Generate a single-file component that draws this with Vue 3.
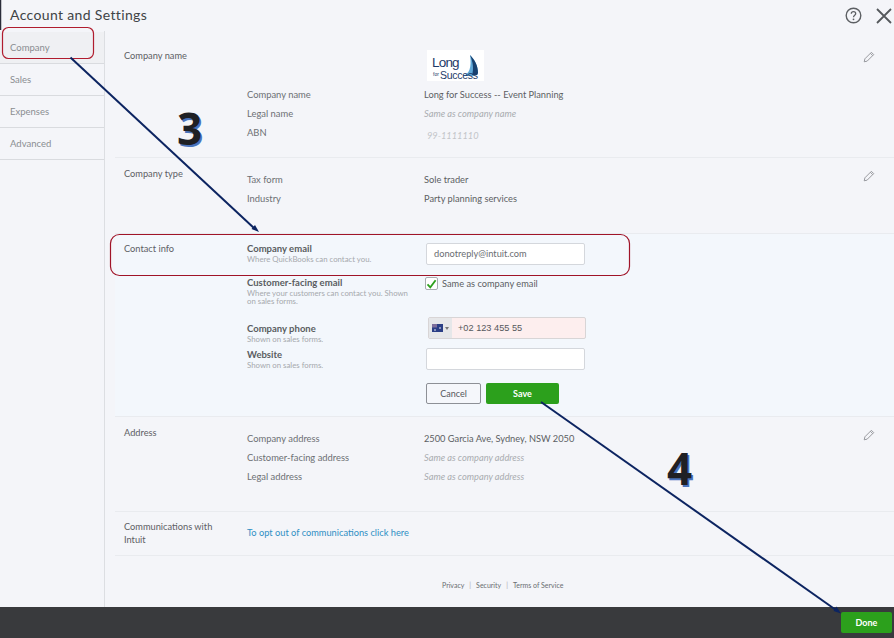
<script setup>
const companyRows = [
  { k: 'Company name', v: 'Long for Success -- Event Planning' },
  { k: 'Legal name', v: 'Same as company name', muted: true },
]
const typeRows = [
  { k: 'Tax form', v: 'Sole trader' },
  { k: 'Industry', v: 'Party planning services' },
]
const addressRows = [
  { k: 'Company address', v: '2500 Garcia Ave, Sydney, NSW 2050' },
  { k: 'Customer-facing address', v: 'Same as company address', muted: true },
  { k: 'Legal address', v: 'Same as company address', muted: true },
]
const nav = ['Company', 'Sales', 'Expenses', 'Advanced']
</script>

<template>
  <div class="page">
    <header class="top">
      <h1>Account and Settings</h1>
      <div class="top-icons">
        <svg width="17" height="17" viewBox="0 0 17 17" fill="none">
          <circle cx="8.5" cy="8.5" r="7.3" stroke="#5c5f63" stroke-width="1.4" />
          <path d="M6.3 6.8c0-1.3 1-2.1 2.2-2.1s2.2.8 2.2 2c0 1.700-2.200 1.600-2.200 3.500" stroke="#5c5f63" stroke-width="1.300" />
          <circle cx="8.500" cy="12.300" r=".9" fill="#5c5f63" />
        </svg>
        <svg width="16" height="16" viewBox="0 0 16 16" fill="none">
          <path d="M1 1l14 14M15 1L1 15" stroke="#55585c" stroke-width="1.800" />
        </svg>
      </div>
    </header>

    <div class="body">
      <nav class="side">
        <div v-for="(n, i) in nav" :key="n" class="nav-item" :class="{ active: i === 0 }">{{ n }}</div>
      </nav>

      <main class="main">
        <section class="row r1">
          <div class="label l1">Company name</div>
          <div class="stack">
            <div class="logo">
              <svg width="57" height="31" viewBox="0 0 57 31">
                <path d="M43 5c5 5 8 11 8 18-1 2-3 3-5 3H36c6-2 9-8 7-21z" fill="#5fa8d8" />
                <path d="M43 5c5 5 8 11 8 18l-1 2h-5c2-6 1-13-2-20z" fill="#17406f" />
                <text x="5" y="16.500" class="logo-long">Long</text>
                <text x="6" y="26" class="logo-for">for</text>
                <text x="13" y="29" class="logo-succ">Success</text>
              </svg>
            </div>
            <div v-for="r in companyRows" :key="r.k" class="kv">
              <span class="k">{{ r.k }}</span>
              <span class="v" :class="{ muted: r.muted }">{{ r.v }}</span>
            </div>
            <div class="kv">
              <span class="k">ABN</span>
              <span class="v abn">99-1111110</span>
            </div>
          </div>
          <svg class="pencil p1" width="12" height="12" viewBox="0 0 12 12" fill="none">
            <path d="M1.200 10.800l.7-3L8.400 1.300l2.300 2.300-6.500 6.500z M7.400 2.300l2.300 2.300" stroke="#8d9095" stroke-width=".9" />
          </svg>
        </section>

        <section class="row r2">
          <div class="label l2">Company type</div>
          <div class="stack">
            <div v-for="r in typeRows" :key="r.k" class="kv">
              <span class="k">{{ r.k }}</span>
              <span class="v">{{ r.v }}</span>
            </div>
          </div>
          <svg class="pencil p2" width="12" height="12" viewBox="0 0 12 12" fill="none">
            <path d="M1.200 10.800l.7-3L8.400 1.300l2.300 2.300-6.500 6.500z M7.400 2.300l2.300 2.300" stroke="#8d9095" stroke-width=".9" />
          </svg>
        </section>

        <section class="row r3">
          <div class="label l3">Contact info</div>
          <div class="form">
            <div class="field f-email">
              <div class="field-text">
                <strong>Company email</strong>
                <small>Where QuickBooks can contact you.</small>
              </div>
              <div class="input email">donotreply@intuit.com</div>
            </div>
            <div class="field f-cust">
              <div class="field-text">
                <strong>Customer-facing email</strong>
                <small>Where your customers can contact you. Shown on sales forms.</small>
              </div>
              <div class="check-line">
                <span class="check">
                  <svg width="11" height="10" viewBox="0 0 11 10" fill="none">
                    <path d="M1.500 5.300l2.800 3L9.600 1.200" stroke="#2ca01c" stroke-width="1.800" />
                  </svg>
                </span>
                <span class="v">Same as company email</span>
              </div>
            </div>
            <div class="field f-phone">
              <div class="field-text">
                <strong>Company phone</strong>
                <small>Shown on sales forms.</small>
              </div>
              <div class="phone">
                <span class="flag">
                  <svg width="11" height="8" viewBox="0 0 11 8">
                    <rect width="11" height="8" fill="#2b3f86" />
                    <rect width="5" height="3.500" fill="#7d6f9c" />
                    <circle cx="8" cy="4" r=".8" fill="#fff" />
                    <circle cx="3" cy="6" r=".8" fill="#fff" />
                  </svg>
                  <i class="caret"></i>
                </span>
                <span class="phone-num">+02 123 455 55</span>
              </div>
            </div>
            <div class="field f-web">
              <div class="field-text">
                <strong>Website</strong>
                <small>Shown on sales forms.</small>
              </div>
              <div class="input web"></div>
            </div>
            <div class="actions">
              <button class="btn cancel">Cancel</button>
              <button class="btn save">Save</button>
            </div>
          </div>
        </section>

        <section class="row r4">
          <div class="label l4">Address</div>
          <div class="stack">
            <div v-for="r in addressRows" :key="r.k" class="kv">
              <span class="k">{{ r.k }}</span>
              <span class="v" :class="{ muted: r.muted }">{{ r.v }}</span>
            </div>
          </div>
          <svg class="pencil p4" width="12" height="12" viewBox="0 0 12 12" fill="none">
            <path d="M1.200 10.800l.7-3L8.400 1.300l2.300 2.300-6.500 6.500z M7.400 2.300l2.300 2.300" stroke="#8d9095" stroke-width=".9" />
          </svg>
        </section>

        <section class="row r5">
          <div class="label l5">Communications with Intuit</div>
          <a class="link">To opt out of communications click here</a>
        </section>

        <footer class="legal">
          <span>Privacy</span><b>|</b><span>Security</span><b>|</b><span>Terms of Service</span>
        </footer>
      </main>
    </div>

    <div class="bar">
      <button class="btn done">Done</button>
    </div>

    <svg class="notes" width="894" height="638" viewBox="0 0 894 638" fill="none">
      <path d="M.5 0v30" stroke="#2b2d3a" stroke-width="1.500" />
      <rect x="2.500" y="27.500" width="91" height="31" rx="6" stroke="#b01c2e" stroke-width="1.200" />
      <rect x="110.500" y="234.500" width="519" height="41" rx="9" stroke="#a01428" stroke-width="1.200" />
      <path d="M70.500 57.500L255 229" stroke="#0c2461" stroke-width="2" />
      <path d="M259 232l-7.500-3 3.500-4z" fill="#0c2461" />
      <path d="M541 402L836 610" stroke="#0c2461" stroke-width="2" />
      <path d="M841 613.500l-7.500-2.500 3-4.500z" fill="#0c2461" />
    </svg>
    <div class="num n3">3</div>
    <div class="num n4">4</div>
  </div>
</template>

<style scoped>
.page {
  position: relative;
  width: 894px;
  height: 638px;
  overflow: hidden;
  display: flex;
  flex-direction: column;
  background: #f4f5f9;
  color: #5d6064;
  font-family: Lato, "Open Sans", sans-serif;
  font-size: 9.250px;
}
.top {
  height: 31px;
  flex: none;
  display: flex;
  align-items: center;
  justify-content: space-between;
  padding: 0 10px 3px 10px;
  box-sizing: border-box;
}
.top h1 {
  margin: 0;
  font-size: 14px;
  font-weight: 400;
  letter-spacing: .35px;
  color: #404346;
}
.top-icons {
  display: flex;
  align-items: center;
  gap: 14px;
  margin-right: -8px;
  margin-top: 3px;
}
.body {
  flex: 1;
  display: flex;
  min-height: 0;
}
.side {
  width: 105px;
  flex: none;
  box-sizing: border-box;
  border-right: 1px solid #dcdee2;
  padding-top: 1px;
}
.nav-item {
  height: 32px;
  box-sizing: border-box;
  border-bottom: 1px solid #d9dbdf;
  padding-left: 10px;
  line-height: 31px;
  font-size: 9.500px;
  color: #8a8d91;
}
.nav-item.active {
  background: #eff0f3;
}
.main {
  flex: 1;
  margin-left: 10px;
  display: flex;
  flex-direction: column;
}
.row {
  position: relative;
  flex: none;
  box-sizing: border-box;
  display: grid;
  grid-template-columns: 123px 1fr;
  padding-left: 9px;
  border-bottom: 1px solid #e9ebef;
}
.label {
  color: #5d6064;
  line-height: 13px;
}
.r1 { height: 127px; }
.l1 { margin-top: 18px; }
.r2 { height: 76px; }
.l2 { margin-top: 9px; }
.r3 { height: 183px; background: #f3f7fc; }
.l3 { margin-top: 8px; }
.r4 { height: 95px; }
.l4 { margin-top: 9px; }
.r5 { height: 44px; }
.l5 { margin-top: 8px; width: 100px; }
.r1 .stack { padding-top: 19px; }
.r2 .stack { padding-top: 12px; }
.r4 .stack { padding-top: 12px; }
.logo {
  margin-left: 180px;
  width: 57px;
  height: 31px;
  background: #fff;
  margin-bottom: 4px;
}
.logo svg { display: block; }
.logo-long {
  font-family: "Liberation Sans", sans-serif;
  font-size: 13.500px;
  letter-spacing: -.8px;
  fill: #1e3a68;
}
.logo-for {
  font-family: "Liberation Sans", sans-serif;
  font-size: 5px;
  fill: #1e3a68;
}
.logo-succ {
  font-family: "Liberation Sans", sans-serif;
  font-size: 10.500px;
  letter-spacing: -.3px;
  fill: #1e3a68;
}
.kv {
  display: grid;
  grid-template-columns: 177px 1fr;
  height: 19px;
  line-height: 19px;
}
.k { color: #6d7074; font-size: 9.400px; }
.v { color: #5c5f63; }
.v.muted {
  font-style: italic;
  color: #a9acb0;
}
.v.abn {
  font-style: italic;
  color: #c3c5c9;
  padding-left: 3px;
  padding-top: 3px;
}
.pencil { position: absolute; right: 19px; }
.p1 { top: 20px; }
.p2 { top: 12px; }
.p4 { top: 12px; }
.form {
  padding-top: 9px;
}
.field {
  display: grid;
  grid-template-columns: 179px 1fr;
}
.field-text { display: flex; flex-direction: column; }
.field-text strong {
  font-weight: 700;
  font-size: 9.500px;
  color: #5a5d61;
  line-height: 12px;
}
.field-text small {
  font-size: 7.800px;
  color: #a6a9ad;
  line-height: 8px;
  width: 170px;
}
.input {
  box-sizing: border-box;
  width: 159px;
  background: #fff;
  border: 1px solid #d4d7dc;
  border-radius: 2px;
}
.email {
  height: 22px;
  line-height: 20px;
  padding-left: 7px;
  color: #6a6d71;
}
.f-email { height: 34px; }
.f-cust { height: 46px; }
.f-phone { height: 26px; }
.f-web { height: 34px; }
.check-line {
  display: flex;
  align-items: center;
  gap: 4px;
  margin-left: -1px;
  height: 13px;
}
.check {
  box-sizing: border-box;
  width: 13px;
  height: 13px;
  border: 1px solid #a9acb1;
  border-radius: 2px;
  background: #fff;
  display: flex;
  align-items: center;
  justify-content: center;
}
.phone {
  box-sizing: border-box;
  width: 158px;
  height: 22px;
  margin-left: 2px;
  margin-top: -6px;
  display: flex;
  border: 1px solid #d8d5d6;
  border-radius: 2px;
  background: #fdeeee;
  font-family: "Liberation Sans", sans-serif;
  font-size: 9.200px;
  color: #55585c;
}
.flag {
  width: 23px;
  flex: none;
  display: flex;
  align-items: center;
  justify-content: center;
  gap: 2px;
  background: #e6e7e9;
}
.caret {
  width: 0;
  height: 0;
  border: 2px solid transparent;
  border-top: 3px solid #777;
  border-bottom: 0;
}
.phone-num {
  padding-left: 6px;
  line-height: 20px;
}
.web {
  height: 22px;
  margin-top: -1px;
}
.actions {
  display: flex;
  gap: 5px;
  margin-left: 179px;
}
.btn {
  box-sizing: border-box;
  height: 21px;
  padding: 0;
  font-family: Lato, sans-serif;
  font-size: 9px;
  border-radius: 2px;
}
.cancel {
  width: 55px;
  background: #f5f7fb;
  border: 1px solid #8d9096;
  color: #55585c;
}
.save {
  width: 73px;
  background: #2ca01c;
  border: 0;
  color: #fff;
  font-weight: 700;
}
.link {
  color: #2f8fc4;
  margin-top: 14px;
  line-height: 13px;
}
.legal {
  display: flex;
  justify-content: flex-start;
  gap: 5px;
  margin-left: 327px;
  margin-top: 24px;
  font-size: 7px;
  color: #6a6d71;
  line-height: 10px;
}
.legal b { font-weight: 400; color: #aaa; }
.bar {
  height: 31px;
  flex: none;
  background: #393a3d;
  display: flex;
  align-items: center;
  justify-content: flex-end;
  padding-right: 2px;
}
.done {
  width: 51px;
  height: 21px;
  background: #2ca01c;
  border: 0;
  color: #fff;
  font-weight: 700;
}
.notes {
  position: absolute;
  left: 0;
  top: 0;
  pointer-events: none;
}
.num {
  position: absolute;
  font-family: "Open Sans", sans-serif;
  font-weight: 700;
  font-size: 44px;
  line-height: 44px;
  color: #1f2024;
  text-shadow: 1.500px 1.500px 0 #4a74bd;
}
.n3 { left: 177px; top: 106px; }
.n4 { left: 667px; top: 446px; }
</style>
